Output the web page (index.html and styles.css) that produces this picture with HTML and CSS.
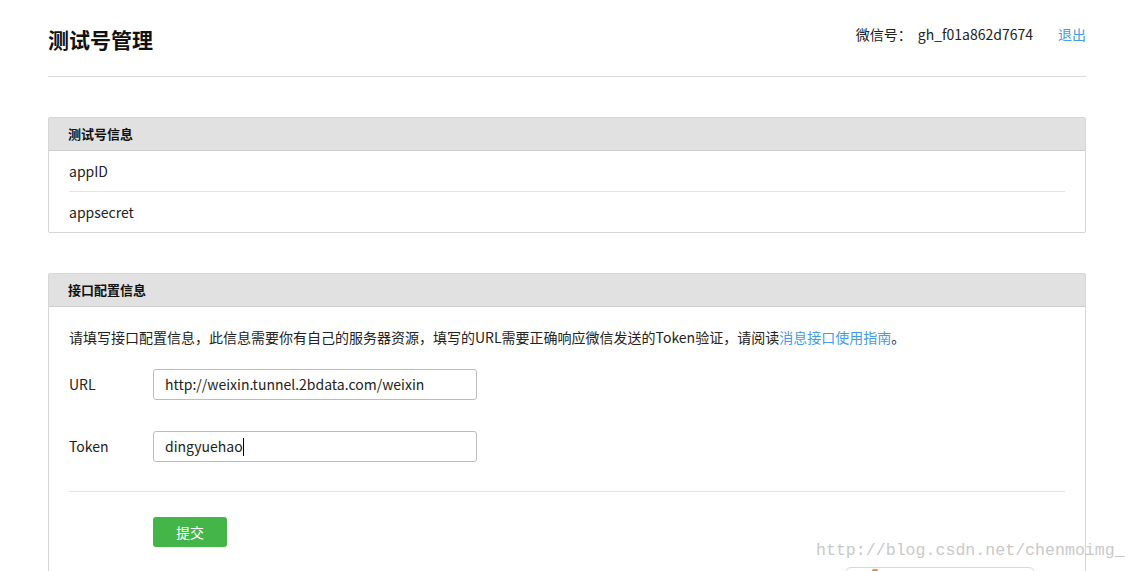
FILE: index.html
```html
<!DOCTYPE html>
<html lang="zh-CN">
<head>
<meta charset="utf-8">
<title>测试号管理</title>
<link rel="stylesheet" href="styles.css">
</head>
<body>
<div class="page">
  <header class="top">
    <h1 class="title">测试号管理</h1>
    <div class="account">
      <span class="account-label">微信号：</span>
      <span class="account-id">gh_f01a862d7674</span>
      <a class="logout" href="#">退出</a>
    </div>
  </header>

  <section class="panel panel-info">
    <div class="panel-head">测试号信息</div>
    <div class="panel-body">
      <div class="info-row">appID</div>
      <div class="info-row">appsecret</div>
    </div>
  </section>

  <section class="panel panel-config">
    <div class="panel-head">接口配置信息</div>
    <div class="panel-body config-body">
      <p class="desc">请填写接口配置信息，此信息需要你有自己的服务器资源，填写的URL需要正确响应微信发送的Token验证，请阅读<a class="link" href="#">消息接口使用指南</a>。</p>
      <div class="form-row">
        <label class="form-label">URL</label>
        <div class="input">http://weixin.tunnel.2bdata.com/weixin</div>
      </div>
      <div class="form-row">
        <label class="form-label">Token</label>
        <div class="input">dingyuehao<span class="caret"></span></div>
      </div>
      <div class="form-divider"></div>
      <div class="actions">
        <button class="btn-submit" type="button">提交</button>
      </div>
    </div>
  </section>
</div>
<div class="watermark">http://blog.csdn.net/chenmoimg_</div>
<div class="float-box"><span class="float-dot"></span></div>
</body>
</html>
```

FILE: styles.css
```css
html, body {
  margin: 0;
  padding: 0;
  background: #fff;
  overflow: hidden;
}
body {
  font-family: "Noto Sans CJK SC", "Noto Sans", sans-serif;
  color: #222;
  font-size: 14px;
}
.page {
  width: 1038px;
  margin-left: 48px;
}
.top {
  display: flex;
  justify-content: space-between;
  align-items: flex-start;
  height: 76px;
  border-bottom: 1px solid #d9d9d9;
}
.title {
  margin: 25px 0 0;
  font-size: 21px;
  line-height: 28px;
  font-weight: 700;
  color: #111;
}
.account {
  margin-top: 24px;
  display: flex;
  align-items: center;
  font-size: 14px;
  line-height: 20px;
  color: #222;
}
.account-label { margin-right: 6px; }
.logout {
  margin-left: 25px;
  color: #459ae9;
  text-decoration: none;
}
.panel {
  border: 1px solid #d6d6d6;
  border-radius: 2px;
  margin-top: 40px;
}
.panel-head {
  height: 32px;
  line-height: 32px;
  background: #e1e1e1;
  border-bottom: 1px solid #cdcdcd;
  padding-left: 19px;
  font-size: 13px;
  font-weight: 700;
  color: #111;
}
.panel-body {
  padding: 0 20px;
}
.info-row {
  height: 40px;
  line-height: 40px;
  font-size: 14px;
  color: #222;
}
.info-row + .info-row {
  border-top: 1px solid #e4e4e4;
}
.config-body {
  padding-top: 19px;
  padding-bottom: 30px;
}
.desc {
  margin: 0;
  font-size: 14px;
  line-height: 22px;
  color: #222;
}
.link {
  color: #459ae9;
  text-decoration: none;
}
.form-row {
  display: flex;
  align-items: center;
  margin-top: 21px;
}
.form-row + .form-row {
  margin-top: 31px;
}
.form-label {
  width: 84px;
  font-size: 14px;
  color: #222;
  margin-top: -2px;
}
.input {
  box-sizing: border-box;
  width: 324px;
  height: 31px;
  border: 1px solid #bcbcbc;
  border-radius: 3px;
  padding-left: 11px;
  line-height: 29px;
  font-size: 14px;
  color: #222;
}
.caret {
  display: inline-block;
  width: 1px;
  height: 18px;
  background: #000;
  vertical-align: -4px;
}
.form-divider {
  height: 1px;
  background: #e4e4e4;
  margin-top: 29px;
}
.actions {
  padding-left: 84px;
  margin-top: 25px;
}
.btn-submit {
  width: 74px;
  height: 30px;
  border: 0;
  border-radius: 3px;
  background: #44b549;
  color: #fff;
  font-family: "Noto Sans CJK SC", sans-serif;
  font-size: 14px;
  padding: 0;
}
.watermark {
  position: absolute;
  left: 816px;
  top: 541px;
  font-family: "Liberation Mono", monospace;
  font-size: 16.6px;
  color: #c9c9c9;
  white-space: nowrap;
}
.float-box {
  position: absolute;
  left: 845px;
  top: 567px;
  width: 188px;
  height: 20px;
  border: 1px solid #d9d9d9;
  border-radius: 6px;
}
.float-dot {
  position: absolute;
  left: 26px;
  top: 1px;
  width: 6px;
  height: 3px;
  background: #f08a4b;
  border-radius: 2px;
}
```
